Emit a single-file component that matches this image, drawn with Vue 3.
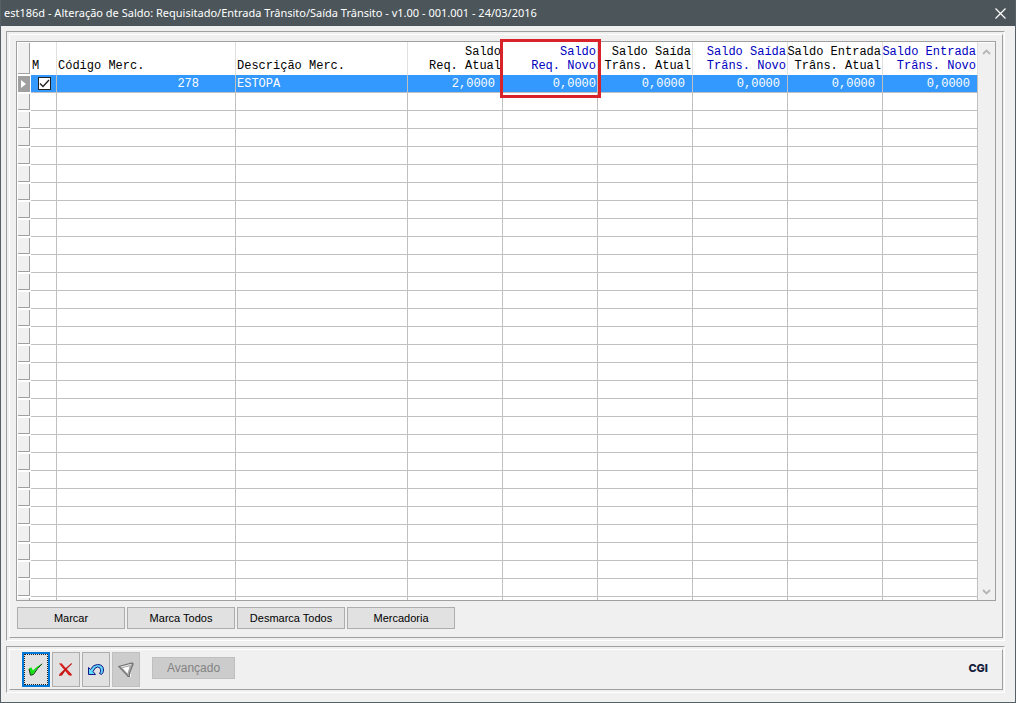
<script setup>
import { ref } from 'vue'

const columns = [
  { key: 'codigo', lines: ['Código Merc.'], cls: 'code' },
  { key: 'descricao', lines: ['Descrição Merc.'], cls: 'desc' },
  { key: 'reqAtual', lines: ['Saldo', 'Req. Atual'], cls: 'num' },
  { key: 'reqNovo', lines: ['Saldo', 'Req. Novo'], cls: 'num editable active' },
  { key: 'saidaAtual', lines: ['Saldo Saída', 'Trâns. Atual'], cls: 'num' },
  { key: 'saidaNovo', lines: ['Saldo Saída', 'Trâns. Novo'], cls: 'num editable' },
  { key: 'entradaAtual', lines: ['Saldo Entrada', 'Trâns. Atual'], cls: 'num' },
  { key: 'entradaNovo', lines: ['Saldo Entrada', 'Trâns. Novo'], cls: 'num editable' }
]

const item = {
  codigo: '278',
  descricao: 'ESTOPA',
  reqAtual: '2,0000',
  reqNovo: '0,0000',
  saidaAtual: '0,0000',
  saidaNovo: '0,0000',
  entradaAtual: '0,0000',
  entradaNovo: '0,0000'
}

const marked = ref(true)
const emptyRows = 29
const actions = ['Marcar', 'Marca Todos', 'Desmarca Todos', 'Mercadoria']
</script>

<template>
  <div class="window">
    <header class="titlebar">
      <h1>est186d - Alteração de Saldo: Requisitado/Entrada Trânsito/Saída Trânsito - v1.00 - 001.001 - 24/03/2016</h1>
      <button class="close" aria-label="Fechar">
        <svg width="11" height="11" viewBox="0 0 11 11"><path d="M.5 .5l10 10M10.500 .5l-10 10" stroke="#fff" stroke-width="1.200" /></svg>
      </button>
    </header>

    <main class="body">
      <section class="bevel main-panel">
        <div class="bevel-in grid-area">
          <div class="frame">
            <div class="grid">
              <table>
                <colgroup>
                  <col class="w-sel" /><col class="w-mark" /><col class="w-code" /><col />
                  <col v-for="n in 6" :key="n" class="w-num" />
                </colgroup>
                <thead>
                  <tr>
                    <td class="sel"><div class="knob"></div></td>
                    <th class="mark">M</th>
                    <th v-for="c in columns" :key="c.key" :class="c.cls">
                      <div v-for="l in c.lines" :key="l">{{ l }}</div>
                    </th>
                  </tr>
                </thead>
                <tbody>
                  <tr class="current">
                    <td class="sel">
                      <div class="knob"><svg width="5" height="8" viewBox="0 0 5 8"><path d="M0 0l5 4l-5 4z" fill="#fff" /></svg></div>
                    </td>
                    <td class="mark">
                      <label class="check">
                        <input v-model="marked" type="checkbox" aria-label="Marcar mercadoria 278" />
                        <svg v-if="marked" width="11" height="11" viewBox="0 0 11 11"><path d="M1 5.500l3 3L10 2" fill="none" stroke="#222" stroke-width="1.400" /></svg>
                      </label>
                    </td>
                    <td v-for="c in columns" :key="c.key" :class="c.cls">{{ item[c.key] }}</td>
                  </tr>
                  <tr v-for="r in emptyRows" :key="r">
                    <td class="sel"><div class="knob"></div></td>
                    <td v-for="c in 9" :key="c"></td>
                  </tr>
                </tbody>
              </table>
            </div>
            <div class="scroll">
              <button aria-label="Rolar para cima"><svg width="9" height="6" viewBox="0 0 9 6"><path d="M1 5l3.500-3.500L8 5" fill="none" stroke="#b5b5b5" stroke-width="1.800" /></svg></button>
              <button aria-label="Rolar para baixo"><svg width="9" height="6" viewBox="0 0 9 6"><path d="M1 1l3.500 3.500L8 1" fill="none" stroke="#b5b5b5" stroke-width="1.800" /></svg></button>
            </div>
            <div class="highlight"></div>
          </div>
          <div class="actions">
            <button v-for="a in actions" :key="a">{{ a }}</button>
          </div>
        </div>
      </section>

      <section class="bevel">
        <div class="bevel-in toolbar">
          <button class="tool focused" aria-label="Confirmar">
            <svg width="16" height="16" viewBox="0 0 16 16">
              <path d="M1 6L3.500 5.500L5 8.500Q8.500 4.500 14 1.500Q9 6 5 12.500L2.500 13Z" fill="#11e411" />
              <path d="M14 1.800Q9 6.500 5.500 12.500L2.500 13.200L1 7" fill="none" stroke="#103c10" stroke-width="1" />
            </svg>
          </button>
          <button class="tool" aria-label="Cancelar">
            <svg width="16" height="16" viewBox="0 0 16 16">
              <path d="M1 1.500L3.500 1.300Q8 6.500 14 12.500L13 14L10.500 13Q6 7.500 1 1.500Z" fill="#d81c1c" />
              <path d="M13.500 1L14 2Q7.500 7.500 4 13.500L1 14L1.500 12Q6.500 7 13.500 1Z" fill="#c41414" />
            </svg>
          </button>
          <button class="tool" aria-label="Desfazer">
            <svg width="16" height="16" viewBox="0 0 16 16">
              <path d="M.5 5.500L2.500 7.500Q5 2.500 9.500 2.500Q15.500 2.500 15.500 8Q15.500 11 13.500 12.500L11.500 11.500Q13 10 12.500 7.500Q12 5 9.500 5Q7 5 5 9.500L7.500 12.500H.5Z" fill="#5fd8fa" stroke="#17178a" stroke-width="1" />
            </svg>
          </button>
          <button class="tool" disabled aria-label="Filtrar">
            <svg width="16" height="16" viewBox="0 0 16 16">
              <path d="M.8 4.500L14 1L15.200 2L11.500 11V14.500H10L8.500 12.500Z" fill="#aaa" stroke="#747474" stroke-width="1.200" />
              <path d="M4.500 6L11.500 4.500L9.500 11.500Z" fill="#fff" />
              <path d="M3 5L13 2.500" stroke="#e5e5e5" />
              <path d="M12.500 12v3" stroke="#f5f5f5" />
            </svg>
          </button>
          <button class="advanced" disabled>Avançado</button>
          <span class="logo">CGI</span>
        </div>
      </section>
    </main>
  </div>
</template>

<style>
html,
body {
  margin: 0;
  background: #f0f0f0;
}
</style>

<style scoped>
* {
  box-sizing: border-box;
}
.window {
  display: flex;
  flex-direction: column;
  height: 100vh;
  min-height: 300px;
  background: #f0f0f0;
  border: 1px solid #566166;
  border-top: 0;
  font-family: "Liberation Sans", Arial, sans-serif;
  font-size: 11px;
  color: #000;
}
button {
  font: inherit;
  color: inherit;
  padding: 0;
  margin: 0;
}
svg {
  display: block;
}
.titlebar {
  display: flex;
  align-items: center;
  justify-content: space-between;
  height: 26px;
  flex: none;
  padding: 0 9px 0 3px;
  background: #4c565a;
  color: #fff;
}
h1 {
  margin: 0;
  font: 11px/26px "Noto Sans", "Open Sans", sans-serif;
  white-space: nowrap;
}
.close {
  border: 0;
  background: none;
}
.body {
  flex: 1;
  min-height: 0;
  display: flex;
  flex-direction: column;
  gap: 5px;
  padding: 5px 10px 9px 5px;
}
.bevel {
  display: flex;
  padding: 2px 1px 2px 2px;
  border: 1px solid;
  border-color: #a0a0a0 #fff #fff #a0a0a0;
}
.bevel-in {
  flex: 1;
  min-width: 0;
  border: 1px solid;
  border-color: #fff #a0a0a0 #a0a0a0 #fff;
}
.main-panel {
  flex: 1;
  min-height: 0;
}
.grid-area {
  display: flex;
  flex-direction: column;
  gap: 6px;
  padding: 6px 6px 8px;
}
.frame {
  position: relative;
  flex: 1;
  min-height: 0;
  display: flex;
  border: 1px solid #a0a0a0;
  background: #fff;
}
.grid {
  flex: 1;
  min-width: 0;
  overflow: hidden;
}
table {
  width: 100%;
  table-layout: fixed;
  border-collapse: separate;
  border-spacing: 0;
  font: 12px/14px "Liberation Mono", "Courier New", monospace;
}
.w-sel {
  width: 14px;
}
.w-mark {
  width: 26px;
}
.w-code {
  width: 179px;
}
.w-num {
  width: 95px;
}
th,
td {
  height: 18px;
  padding: 1px 1px 0;
  border-right: 1px solid #c0c0c0;
  border-bottom: 1px solid #c0c0c0;
  text-align: left;
  font-weight: 400;
  line-height: 16px;
  white-space: nowrap;
}
th {
  height: 33px;
  padding-bottom: 2px;
  border-bottom: 0;
  border-right-color: #e0e0e0;
  line-height: 14px;
  vertical-align: bottom;
}
th.num {
  text-align: right;
}
th.num div {
  display: flex;
  justify-content: flex-end;
}
th.editable {
  color: #0000c0;
}
td.num {
  text-align: right;
  padding-right: 7px;
}
td.active {
  padding-right: 1px;
}
td.code {
  text-align: right;
  padding-right: 36px;
}
.current td {
  background: #3399ff;
  color: #fff;
}
td.sel,
.current td.sel {
  padding: 1px;
  border: 0;
  background: #fff;
}
.knob {
  height: 16px;
  background: #f0f0f0;
  border-right: 1px solid #a0a0a0;
  border-bottom: 1px solid #a0a0a0;
}
thead .knob {
  height: 31px;
}
.current .knob {
  display: flex;
  align-items: center;
  justify-content: center;
  background: #a0a0a0;
}
td.mark {
  padding: 0 0 0 7px;
}
.check {
  position: relative;
  display: block;
  width: 13px;
  height: 13px;
}
.check input {
  appearance: none;
  display: block;
  width: 13px;
  height: 13px;
  margin: 0;
  border: 1px solid #222;
  background: #fff;
}
.check svg {
  position: absolute;
  inset: 1px;
  pointer-events: none;
}
.scroll {
  flex: none;
  width: 17px;
  display: flex;
  flex-direction: column;
  justify-content: space-between;
  margin-top: 1px;
  background: #f0f0f0;
}
.scroll button {
  display: grid;
  place-items: center;
  height: 17px;
  border: 0;
  background: none;
}
.highlight {
  position: absolute;
  top: -3px;
  right: 394px;
  width: 101px;
  height: 59px;
  border: 3px solid #d8232a;
  pointer-events: none;
}
.actions {
  display: flex;
  gap: 2px;
  padding-left: 1px;
}
.actions button {
  width: 108px;
  height: 22px;
  border: 1px solid #adadad;
  background: #e1e1e1;
}
.toolbar {
  display: flex;
  align-items: center;
  gap: 2px;
  padding: 2px 14px 2px 12px;
}
.tool {
  display: grid;
  place-items: center;
  width: 28px;
  height: 35px;
  border: 1px solid #adadad;
  background: #e1e1e1;
}
.tool:disabled,
.advanced {
  border: 1px solid #bfbfbf;
  background: #cccccc;
}
.focused {
  border: 2px solid #0078d7;
  outline: 1px dotted #222;
  outline-offset: -3px;
}
.advanced {
  width: 83px;
  height: 22px;
  margin: 0 0 4px 10px;
  color: #838383;
  font-size: 12px;
}
.logo {
  margin: 0 0 4px auto;
  font: 800 11px/12px Inter, "Liberation Sans", sans-serif;
  color: #141c3c;
}
</style>
